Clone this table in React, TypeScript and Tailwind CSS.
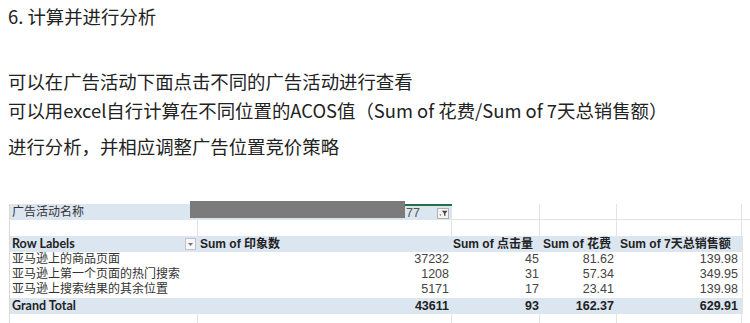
const cjk = { fontFamily: '"Noto Sans CJK SC", sans-serif' };
const cell = { fontFamily: '"Liberation Sans", "Noto Sans CJK SC", sans-serif' };
const label = { fontFamily: 'Lato, "Noto Sans CJK SC", sans-serif' };

const rows = [
  { name: "亚马逊上的商品页面", a: "37232", b: "45", c: "81.62", d: "139.98", h: "h-[15px]" },
  { name: "亚马逊上第一个页面的热门搜索", a: "1208", b: "31", c: "57.34", d: "349.95", h: "h-[15px]" },
  { name: "亚马逊上搜索结果的其余位置", a: "5171", b: "17", c: "23.41", d: "139.98", h: "h-[16px]" },
];

const FilterIcon = () => (
  <svg width="9" height="7" viewBox="0 0 9 7">
    <path d="M0.5 4.5 L2.5 4.5 L1.5 5.8 Z" fill="#444" />
    <path d="M3 0.8 H8.5 L6.4 3.4 V6.2 L5.1 5.4 V3.4 Z" fill="#444" />
  </svg>
);

export default function App() {
  return (
    <div className="w-[750px] h-[323px] overflow-hidden bg-white text-[#222]">
      <div style={cjk} className="pl-[8px] text-[18.4px] leading-[24px]">
        <div className="mt-[4px]">6. 计算并进行分析</div>
        <div className="mt-[41px]">可以在广告活动下面点击不同的广告活动进行查看</div>
        <div className="mt-[5px]">可以用excel自行计算在不同位置的ACOS值（Sum of 花费/Sum of 7天总销售额）</div>
        <div className="mt-[12px]">进行分析，并相应调整广告位置竞价策略</div>
      </div>

      <div className="mt-[38px] relative text-[12px]">
        <div className="h-[8px]" />

        {/* row 1: report filter */}
        <div className="flex h-[16px]">
          <div className="w-[10px] border-r border-[#d9d9d9]" />
          <div style={cell} className="w-[188px] bg-[#dce6f1] pl-[2px] leading-[16px] text-[#333]">广告活动名称</div>
          <div className="w-[254px] bg-[#dce6f1] border-t-2 border-[#217346] flex items-center justify-end pr-[3px] gap-[17px]">
            <span style={cell} className="text-[#555] leading-[14px] text-[12.5px]">77</span>
            <span className="w-[12px] h-[11px] border border-[#b0b0b0] bg-[#f4f4f4] flex items-center justify-center">
              <FilterIcon />
            </span>
          </div>
          <div className="w-[88px] border-r border-b border-[#e3e3e3]" />
          <div className="w-[77px] border-r border-b border-[#e3e3e3]" />
          <div className="w-[125px] border-r border-b border-[#e3e3e3]" />
          <div className="flex-1 border-b border-[#e3e3e3]" />
        </div>

        {/* row 2: empty */}
        <div className="flex h-[16px]">
          <div className="w-[10px] border-r border-[#d9d9d9]" />
          <div className="w-[188px] border-r border-[#e3e3e3]" />
          <div className="w-[254px] border-r border-[#e3e3e3]" />
          <div className="w-[88px] border-r border-[#e3e3e3]" />
          <div className="w-[77px] border-r border-[#e3e3e3]" />
          <div className="w-[125px] border-r border-[#e3e3e3]" />
          <div className="flex-1" />
        </div>

        {/* row 3: headers */}
        <div className="flex h-[16px] font-bold leading-[16px] text-[#222]">
          <div className="w-[10px] border-r border-[#d9d9d9]" />
          <div className="w-[732px] bg-[#dce6f1] flex">
            <div style={label} className="w-[188px] pl-[2px] flex items-center justify-between pr-[2px] text-[12.5px]">
              <span>Row Labels</span>
              <span className="w-[11px] h-[12px] border border-[#c4c4c4] bg-[#f7f7f7] flex items-center justify-center">
                <svg width="5" height="3" viewBox="0 0 5 3"><path d="M0 0 H5 L2.5 3 Z" fill="#777" /></svg>
              </span>
            </div>
            <div style={cell} className="w-[254px] pl-[2px]">Sum of 印象数</div>
            <div style={cell} className="w-[88px] pl-[1px] whitespace-nowrap">Sum of 点击量</div>
            <div style={cell} className="w-[77px] pl-[3px] whitespace-nowrap">Sum of 花费</div>
            <div style={cell} className="w-[125px] pl-[3px] whitespace-nowrap">Sum of 7天总销售额</div>
          </div>
          <div className="flex-1 border-l border-[#e3e3e3]" />
        </div>

        {/* data rows */}
        {rows.map((r) => (
          <div key={r.name} className={`flex ${r.h} leading-[15px]`}>
            <div className="w-[10px] border-r border-[#d9d9d9]" />
            <div style={cell} className="w-[188px] pl-[2px] text-[#333] whitespace-nowrap">{r.name}</div>
            <div style={cell} className="w-[254px] text-right pr-[3px] text-[#444] text-[12.5px]">{r.a}</div>
            <div style={cell} className="w-[88px] text-right pr-[1px] text-[#444] text-[12.5px]">{r.b}</div>
            <div style={cell} className="w-[77px] text-right pr-[3px] text-[#444] text-[12.5px]">{r.c}</div>
            <div style={cell} className="w-[125px] text-right pr-[4px] text-[#444] text-[12.5px]">{r.d}</div>
            <div className="flex-1 border-l border-[#e3e3e3]" />
          </div>
        ))}

        {/* grand total */}
        <div className="flex h-[16px] font-bold leading-[16px] text-[#222]">
          <div className="w-[10px] border-r border-[#d9d9d9]" />
          <div className="w-[732px] bg-[#dce6f1] flex">
            <div style={label} className="w-[188px] pl-[2px] text-[12.5px]">Grand Total</div>
            <div style={cell} className="w-[254px] text-right pr-[3px] text-[12.5px]">43611</div>
            <div style={cell} className="w-[88px] text-right pr-[1px] text-[12.5px]">93</div>
            <div style={cell} className="w-[77px] text-right pr-[3px] text-[12.5px]">162.37</div>
            <div style={cell} className="w-[125px] text-right pr-[4px] text-[12.5px]">629.91</div>
          </div>
          <div className="flex-1 border-l border-[#e3e3e3]" />
        </div>

        {/* trailing empty row */}
        <div className="flex h-[12px]">
          <div className="w-[10px] border-r border-[#d9d9d9]" />
          <div className="w-[188px] border-r border-[#e3e3e3]" />
          <div className="w-[254px] border-r border-[#e3e3e3]" />
          <div className="w-[88px] border-r border-[#e3e3e3]" />
          <div className="w-[77px] border-r border-[#e3e3e3]" />
          <div className="w-[125px] border-r border-[#e3e3e3]" />
          <div className="flex-1" />
        </div>

        {/* redaction block over the filter value */}
        <div className="absolute left-[190px] top-[5px] w-[215px] h-[17px] bg-[#7b7b7b]" />
      </div>
    </div>
  );
}
